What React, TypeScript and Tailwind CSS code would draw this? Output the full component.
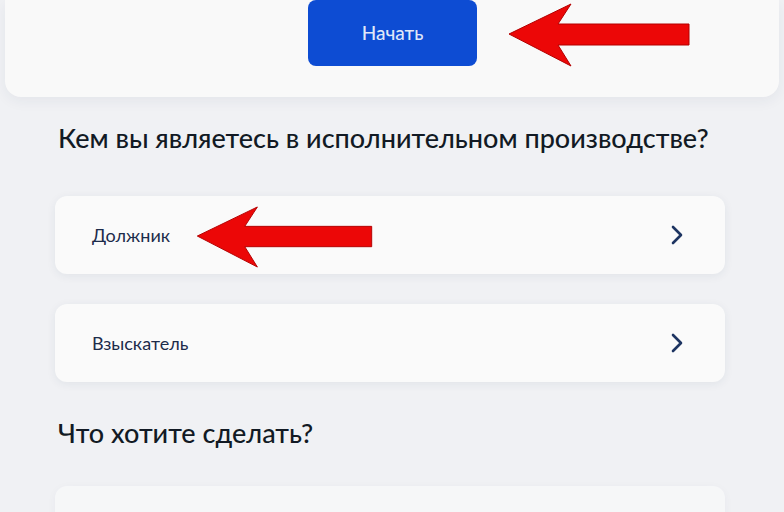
import type { ReactNode } from "react";

// red pointer arrow, tip on the left
function PointerArrow({ className }: { className: string }) {
    return (
        <svg viewBox="0 0 182 64" className={className} aria-hidden="true">
            <polygon
                points="1,31 63,1 50,21 181,21 181,42 50,42 63,63"
                fill="#ec0707"
                stroke="#b30000"
                strokeWidth="1"
                strokeLinejoin="miter"
            />
        </svg>
    );
}

function Chevron() {
    return (
        <svg width="12" height="20" viewBox="0 0 12 20" fill="none" aria-hidden="true">
            <path d="M2 2 L10 10 L2 18" stroke="#1d3461" strokeWidth="2.6" strokeLinecap="round" strokeLinejoin="round" />
        </svg>
    );
}

function RoleCard({ children }: { children: ReactNode }) {
    return (
        <button className="flex h-[78px] w-full items-center justify-between rounded-xl bg-[#fafafa] pl-[37px] pr-[42px] text-left shadow-[0_2px_10px_rgba(30,50,90,0.07)]">
            <span className="text-[18px] text-[#1c2b4a]">{children}</span>
            <Chevron />
        </button>
    );
}

export default function App() {
    return (
        <div
            className="relative h-[512px] overflow-hidden bg-[#f0f1f4]"
            style={{ fontFamily: "Lato, 'Open Sans', sans-serif" }}
        >
            <div className="mx-[5px] flex h-[97px] justify-center rounded-b-2xl bg-[#f9f9f9] shadow-[0_4px_14px_rgba(30,50,90,0.06)]">
                <button className="h-[66px] w-[169px] rounded-lg bg-[#0d4cd3] pl-px text-[19px] font-medium text-[#dfe7f8]">
                    Начать
                </button>
            </div>

            <div className="ml-[55px] w-[670px]">
                <h2 className="mt-[25px] pl-[3px] text-[27px] leading-8 font-medium text-[#121a24]">
                    Кем вы являетесь в исполнительном производстве?
                </h2>

                <div className="mt-[42px] flex flex-col gap-[30px]">
                    <RoleCard>Должник</RoleCard>
                    <RoleCard>Взыскатель</RoleCard>
                </div>

                <h2 className="mt-[35px] pl-[3px] text-[27px] leading-8 font-medium text-[#121a24]">
                    Что хотите сделать?
                </h2>

                <div className="mt-[37px] h-[78px] rounded-xl bg-[#f6f7f8] shadow-[0_2px_10px_rgba(30,50,90,0.04)]" />
            </div>

            <PointerArrow className="absolute left-[508px] top-[3px] h-[64px] w-[182px]" />
            <PointerArrow className="absolute left-[194px] top-[206px] h-[62px] w-[181px]" />
        </div>
    );
}
